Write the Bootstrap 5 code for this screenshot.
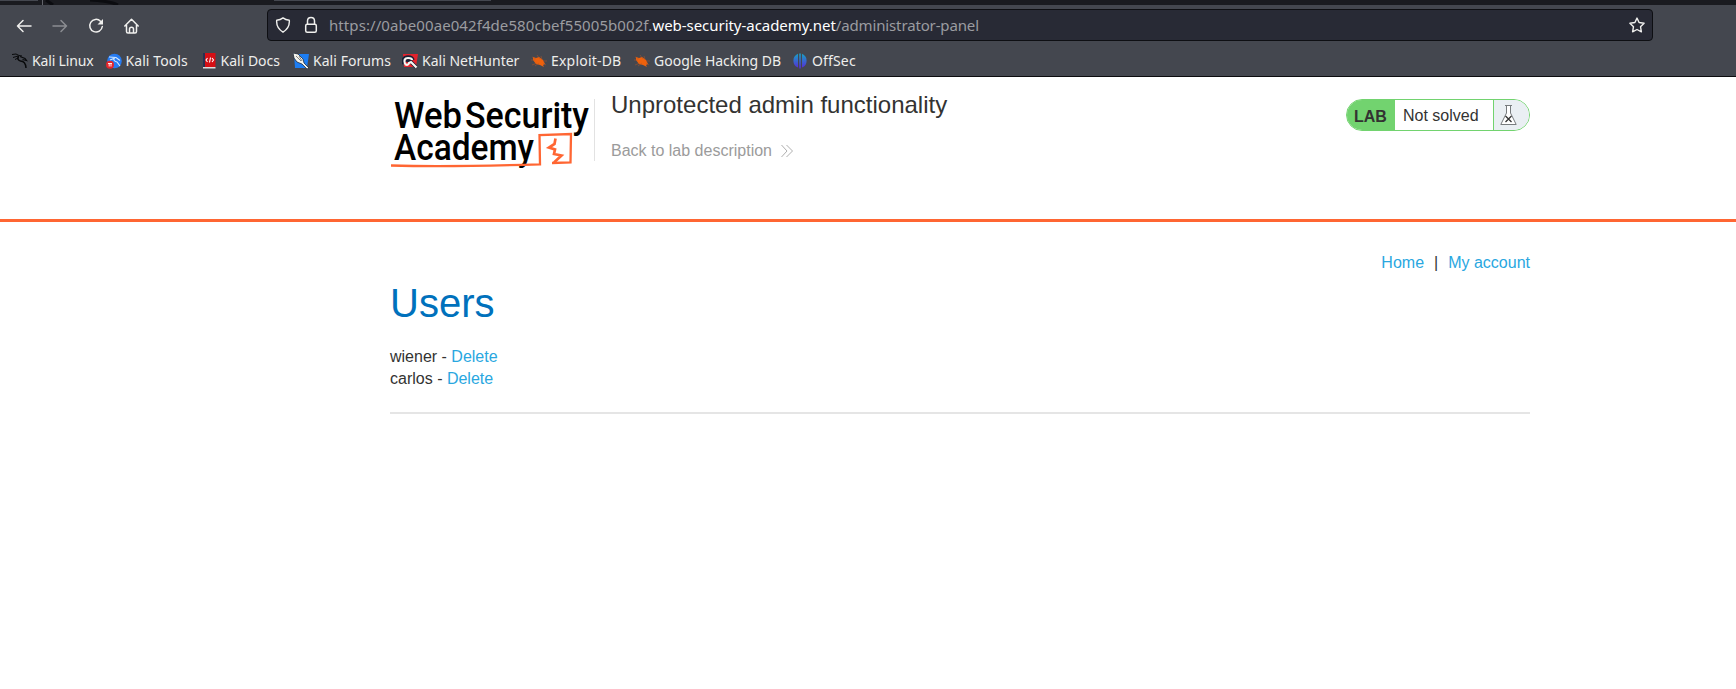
<!DOCTYPE html>
<html lang="en">
<head>
<meta charset="utf-8">
<title>Unprotected admin functionality</title>
<link href="https://cdn.jsdelivr.net/npm/bootstrap@5.3.0/dist/css/bootstrap.min.css" rel="stylesheet">
<style>
body{font-family:"Liberation Sans",Arial,sans-serif;font-size:16px;line-height:22px;color:#333332;background:#fff}
a{color:#29a7df;text-decoration:none}
.chrome{height:77px;background:#44474f;border-bottom:1px solid #0c0c0f;font-family:"Noto Sans",sans-serif;color:#eeeeec}
.tabstrip{height:5px;background:#1a1b20}
.tabstrip svg{display:block}
.tools{height:40px;padding-top:4px}
.nav-icons{width:267px;padding-left:16px;gap:20px;height:33px}
.url{width:1386px;height:32px;background:#282a35;border:1px solid #0e0f13;border-radius:4px;padding:0 7px;color:#9b9ca0;font-size:15px;line-height:30px}
.url-text{margin-left:2px;letter-spacing:.08px}
.url-text b{font-weight:400;color:#fff;letter-spacing:-.04px}
.url-text i{font-style:normal;letter-spacing:-.14px}
.marks{height:31px;padding-left:12px;font-size:14px;line-height:20px}
.marks svg{margin-right:4px;flex:none}
.marks span:nth-child(1){width:93.500px;letter-spacing:-.16px}
.marks span:nth-child(2){width:95px;letter-spacing:.08px}
.marks span:nth-child(3){width:92.500px}
.marks span:nth-child(4){width:109px;letter-spacing:.05px}
.marks span:nth-child(5){width:129px}
.marks span:nth-child(6){width:103px;letter-spacing:.2px}
.marks span:nth-child(7){width:158px}
.marks span:nth-child(8){letter-spacing:.15px}
.page{width:1140px;margin-left:390px}
.lab-head{height:145px;border-bottom:3px solid #ff6633}
.lab-head .page{padding-top:22px}
.logo{width:205px;height:62px;border-right:1px solid #e2e2e2;flex:none}
.logo svg{display:block;overflow:visible}
.lab-title{font-size:24px;line-height:28px;margin:-8px 0 0;font-weight:400}
.back{color:#9b9b9b;margin-top:21px}
.status{height:32px;border:1px solid #72d36f;border-radius:16px;width:184px;overflow:hidden;background:#fff}
.status .tag{width:48px;background:#72d36f;font-weight:700;padding:6px 0 0 7px}
.status .txt{width:99px;padding:5px 0 0 8px;border-right:1px solid #72d36f}
.status .flask{background:#eaeff3;flex:1;padding:5px 0 0 6px}
.account{padding-top:30px}
h1.users{font-size:40px;line-height:48px;font-weight:400;color:#0071bc;margin:5px 0 19px}
.rule{height:2px;background:#e5e5e5;margin-top:22px}
</style>
</head>
<body>
<header class="chrome">
  <div class="tabstrip"><svg width="1736" height="5"><path d="M0 0H38V1H0zM274 0H491V1H274z" fill="#44474f"/><path d="M42.500 0V5" stroke="#62646b"/><path d="M46 0l7 5M90 0q20 1 28 5" stroke="#0b0c10" stroke-width="3" fill="none"/></svg></div>
  <div class="tools d-flex">
    <div class="nav-icons d-flex align-items-center">
      <svg width="16" height="16" fill="none" stroke="#f0f0ee" stroke-width="1.500" stroke-linecap="round" stroke-linejoin="round"><path d="M15 8H1.500M7 2.500L1.500 8 7 13.500"/></svg>
      <svg width="16" height="16" fill="none" stroke="#8b8d92" stroke-width="1.500" stroke-linecap="round" stroke-linejoin="round"><path d="M1 8H14.500M9 2.500L14.500 8 9 13.500"/></svg>
      <svg width="16" height="16"><path d="M12.500 3.200A6.300 6.300 0 1 0 14.300 8.500" fill="none" stroke="#f0f0ee" stroke-width="1.500" stroke-linecap="round"/><path d="M15 1V6.500H9.500z" fill="#f0f0ee"/></svg>
      <svg width="16" height="16" fill="none" stroke="#f0f0ee" stroke-width="1.500" stroke-linecap="round" stroke-linejoin="round"><path d="M.8 8L7.500 1.200 14.200 8M2.500 7V13.500Q2.500 15 4 15H11Q12.500 15 12.500 13.500V7M5.500 14.500V11Q5.500 9.200 7.500 9.200T9.500 11V14.500"/></svg>
    </div>
    <div class="url d-flex align-items-center">
      <svg width="16" height="16" fill="none" stroke="#f0f0ee" stroke-width="1.400" stroke-linejoin="round"><path d="M8 .9Q10.500 2.900 14.300 3.200Q15 11 8 15.200Q1 11 1.700 3.200Q5.500 2.900 8 .9z"/></svg>
      <svg class="ms-2" width="28" height="18" fill="none" stroke="#f0f0ee" stroke-width="1.500"><rect x="6.700" y="8.200" width="10.600" height="8" rx="1.500"/><path d="M8.500 8V5Q8.500 1.500 12 1.500T15.500 5V8"/></svg>
      <span class="url-text text-nowrap">https://0abe00ae042f4de580cbef55005b002f.<b>web-security-academy.net</b><i>/administrator-panel</i></span>
      <svg class="ms-auto" width="16" height="16" fill="none" stroke="#f0f0ee" stroke-width="1.400" stroke-linejoin="round"><path d="M8 1.100l2.100 4.400 5 .7-3.600 3.500.9 5.100L8 12.500l-4.400 2.300.9-5.100L.9 6.200l5-.7z"/></svg>
    </div>
  </div>
  <nav class="marks d-flex align-items-center text-nowrap">
    <span class="d-flex align-items-center"><svg width="16" height="16" fill="none" stroke="#08090b"><path d="M0 1.500l4-.5 3 1.500 3 .5M1 4.500l5-1.500M3 6.500l4-2" stroke-width="1"/><path d="M6.500 3q-2 4 2 5 5 0 5.500 7" stroke-width="1.500"/><path d="M8 3.500l5 2 1.500 2-4-1" stroke-width="1.200"/></svg>Kali Linux</span>
    <span class="d-flex align-items-center"><svg width="16" height="16"><circle cx="8.500" cy="8" r="7.300" fill="#267bf2"/><path d="M3 4l7 .5 4 3M4 7l5-2M8 5q-1 3 3 4l3 4" fill="none" stroke="#d4e9ff" stroke-width="1.100"/><circle cx="4" cy="11.700" r="4" fill="#e4252b"/><path d="M2 10.500h4M3.200 10.500v3M5 10.500v3" stroke="#fff" stroke-width=".9"/></svg>Kali Tools</span>
    <span class="d-flex align-items-center"><svg width="16" height="16"><path d="M2 0H14.500V14H2z" fill="#d50f15"/><path d="M2 0H4V14H2z" fill="#283051"/><path d="M2 14H14.500V15.500H2z" fill="#ddd"/><path d="M6.500 5L5 7l1.500 2M11 5l1.500 2L11 9M9.500 4.500l-1 5" fill="none" stroke="#fff" stroke-width="1.100"/></svg>Kali Docs</span>
    <span class="d-flex align-items-center"><svg width="16" height="16"><path d="M1 1H16L14 15H2z" fill="#1d7df2"/><path d="M0 0l5 1 5 5 1 4 5 5-2 1-5-5-5-2-3-4z" fill="#f3f3ed" stroke="#111b2b" stroke-width=".7"/><path d="M3 3l5 5M6 3l3 5" stroke="#333" stroke-width=".6"/></svg>Kali Forums</span>
    <span class="d-flex align-items-center"><svg width="16" height="16"><path d="M1 1H16L14 14H2z" fill="#e2232d"/><path d="M2 11Q0 4 6 4q4 0 5 3M5 9Q6 6 8 8l6 6" fill="none" stroke="#182035" stroke-width="3.600"/><path d="M3 11Q1 5 6 5q4 0 4 2M3 11q3 2 4-1l2-1 5.500 5.500" fill="none" stroke="#f7f7f2" stroke-width="2.200"/></svg>Kali NetHunter</span>
    <span class="d-flex align-items-center"><svg width="16" height="16"><path d="M2 4l3 1 3-1 4 3 2 4-2 1 1 2-4-2-4-1-3-4z" fill="#ee610c"/><path d="M0 7h4M1 12l5-2M6 2l3 4M10 3l1 4M12 8h4M4 13l4-3M1 4l4 2M12 10l3 2" stroke="#b75624" stroke-width=".5"/></svg>Exploit-DB</span>
    <span class="d-flex align-items-center"><svg width="16" height="16"><path d="M2 4l3 1 3-1 4 3 2 4-2 1 1 2-4-2-4-1-3-4z" fill="#ee610c"/><path d="M0 7h4M1 12l5-2M6 2l3 4M10 3l1 4M12 8h4M4 13l4-3M1 4l4 2M12 10l3 2" stroke="#b75624" stroke-width=".5"/></svg>Google Hacking DB</span>
    <span class="d-flex align-items-center"><svg width="16" height="16"><defs><linearGradient id="os" x2="0" y2="1"><stop stop-color="#17a3c4"/><stop offset="1" stop-color="#5829d8"/></linearGradient></defs><path d="M6 .8V14.500A7.400 7.400 0 0 1 6 .8zM10 .8V14.500A7.400 7.400 0 0 0 10 .8zM7.200 .5H8.800V15.500H7.200z" fill="url(#os)"/></svg>OffSec</span>
  </nav>
</header>

<section class="lab-head">
  <div class="page d-flex align-items-start">
    <div class="logo"><svg width="205" height="70" font-family="Roboto,sans-serif" font-weight="500" font-size="37.500" fill="#000">
      <text x="4" y="28.500" textLength="68" lengthAdjust="spacingAndGlyphs">Web</text>
      <text x="75" y="28.500" textLength="124" lengthAdjust="spacingAndGlyphs">Security</text>
      <text x="4" y="61" textLength="140" lengthAdjust="spacingAndGlyphs">Academy</text>
      <g fill="none" stroke="#ff6633"><path d="M1 66.500Q60 68 150 65.300L149.500 36 181 35 180.500 63.500 162 64" stroke-width="2.300"/><path d="M165.500 39.500L164.500 45 159 48.500 165 50.500 164 55 171.500 56.500 164 63.500" stroke-width="2.700"/></g></svg></div>
    <div style="margin-left:16px">
      <h2 class="lab-title">Unprotected admin functionality</h2>
      <a class="back d-flex align-items-center" href="#">Back to lab description<svg class="ms-2" width="14" height="14" fill="none" stroke="#a5a5a5" stroke-width=".9"><path d="M1.500 1L7 7l-5.500 6M6.500 1L12.500 7l-6 6"/></svg></a>
    </div>
    <div class="status d-flex ms-auto"><div class="tag">LAB</div><div class="txt">Not solved</div><div class="flask"><svg class="d-block" width="17" height="20" fill="none" stroke="#777b7d"><path d="M5 .5H12M6.500 1V8L.8 19.500H16.200L10.500 8V1" fill="#fff"/><path d="M5.500 11l6 6M11.500 11l-6 6" stroke="#333" stroke-width="1.300"/></svg></div></div>
  </div>
</section>

<main class="page">
  <div class="account d-flex justify-content-end"><a href="#">Home</a><span style="margin:0 10px">|</span><a href="#">My account</a></div>
  <h1 class="users">Users</h1>
  <div>wiener - <a href="#">Delete</a></div>
  <div>carlos - <a href="#">Delete</a></div>
  <div class="rule"></div>
</main>
<script src="https://cdn.jsdelivr.net/npm/bootstrap@5.3.0/dist/js/bootstrap.bundle.min.js"></script>
</body>
</html>
